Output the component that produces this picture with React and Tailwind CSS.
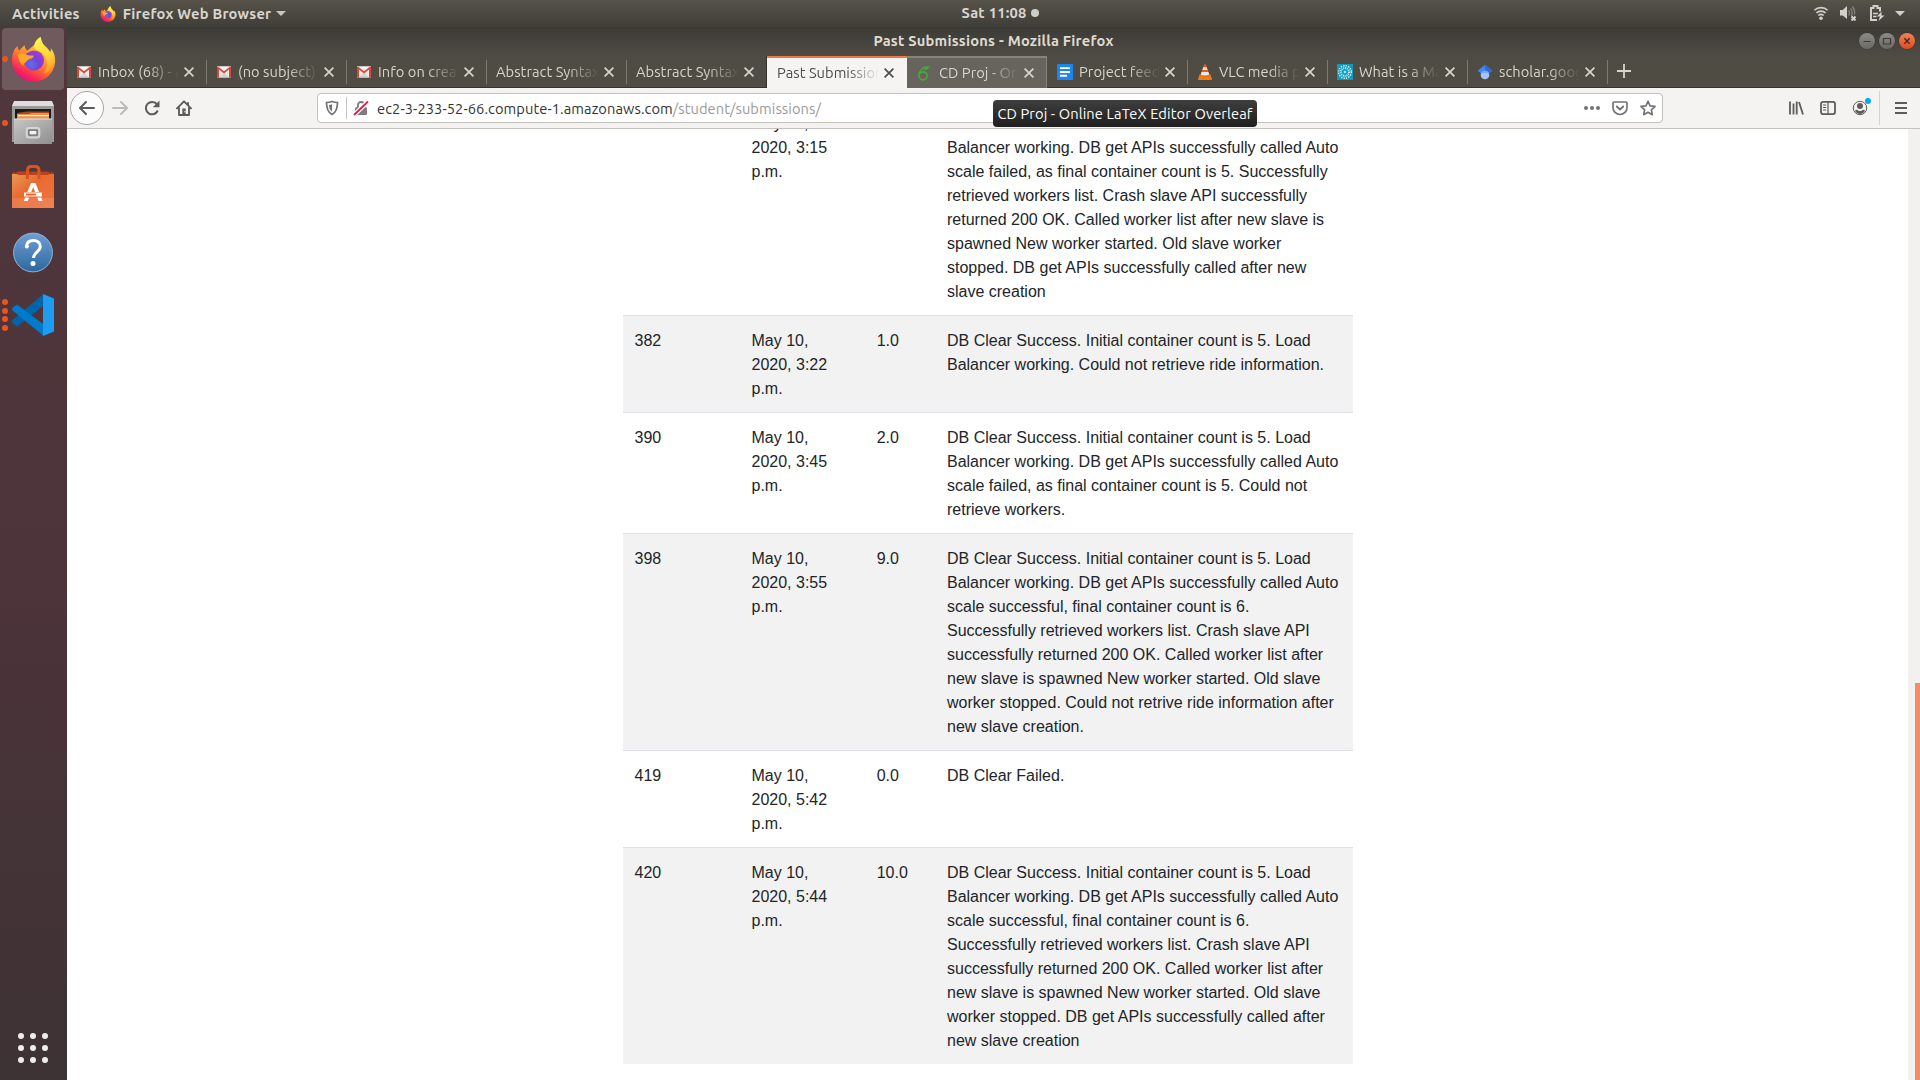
const ROWS = [
  {
    id: "",
    date: "May 10, 2020, 3:15 p.m.",
    marks: "",
    text: "DB Clear Success. Initial container count is 5. Load Balancer working. DB get APIs successfully called Auto scale failed, as final container count is 5. Successfully retrieved workers list. Crash slave API successfully returned 200 OK. Called worker list after new slave is spawned New worker started. Old slave worker stopped. DB get APIs successfully called after new slave creation",
  },
  {
    id: "382",
    date: "May 10, 2020, 3:22 p.m.",
    marks: "1.0",
    text: "DB Clear Success. Initial container count is 5. Load Balancer working. Could not retrieve ride information.",
  },
  {
    id: "390",
    date: "May 10, 2020, 3:45 p.m.",
    marks: "2.0",
    text: "DB Clear Success. Initial container count is 5. Load Balancer working. DB get APIs successfully called Auto scale failed, as final container count is 5. Could not retrieve workers.",
  },
  {
    id: "398",
    date: "May 10, 2020, 3:55 p.m.",
    marks: "9.0",
    text: "DB Clear Success. Initial container count is 5. Load Balancer working. DB get APIs successfully called Auto scale successful, final container count is 6. Successfully retrieved workers list. Crash slave API successfully returned 200 OK. Called worker list after new slave is spawned New worker started. Old slave worker stopped. Could not retrive ride information after new slave creation.",
  },
  { id: "419", date: "May 10, 2020, 5:42 p.m.", marks: "0.0", text: "DB Clear Failed." },
  {
    id: "420",
    date: "May 10, 2020, 5:44 p.m.",
    marks: "10.0",
    text: "DB Clear Success. Initial container count is 5. Load Balancer working. DB get APIs successfully called Auto scale successful, final container count is 6. Successfully retrieved workers list. Crash slave API successfully returned 200 OK. Called worker list after new slave is spawned New worker started. Old slave worker stopped. DB get APIs successfully called after new slave creation",
  },
];

function FirefoxLogo({ className, id }) {
  return (
    <svg viewBox="0 0 46 48" className={className}>
      <defs>
        <linearGradient id={id + "body"} x1="0.85" y1="0.05" x2="0.3" y2="1">
          <stop offset="0" stopColor="#fff44f" />
          <stop offset="0.35" stopColor="#ffb22e" />
          <stop offset="0.62" stopColor="#ff6b30" />
          <stop offset="0.85" stopColor="#f5275a" />
          <stop offset="1" stopColor="#e0127c" />
        </linearGradient>
        <linearGradient id={id + "flame"} x1="0.3" y1="0" x2="0.6" y2="1">
          <stop offset="0" stopColor="#fff44f" />
          <stop offset="0.6" stopColor="#ffd43a" />
          <stop offset="1" stopColor="#ff9a28" />
        </linearGradient>
        <radialGradient id={id + "globe"} cx="0.35" cy="0.7" r="0.8">
          <stop offset="0" stopColor="#5f6ff0" />
          <stop offset="0.5" stopColor="#7542d6" />
          <stop offset="1" stopColor="#b833e1" />
        </radialGradient>
      </defs>
      <path
        d="M2 17 C3 13.5 5 11.500 6.500 10.500 C6.500 13 7 14 8 15 C10 13 12 12 13.500 9.500 C14 12 14.500 14 16.500 15.500 L24 9 C24.500 6 27 3 30.500 1 C31 6 33 9 36 11.500 C38.500 14 39.500 15.500 40 17 C41 16.500 41.500 14.500 41 12.500 C44.500 17 46 22 45.500 27 C44.500 39 35 47.500 23 47.500 C10.500 47.500 1 38.500 0.500 26 C0.500 22.500 1 19.500 2 17 Z"
        fill={"url(#" + id + "body)"}
      />
      <circle cx="23.500" cy="25.500" r="10.500" fill={"url(#" + id + "globe)"} />
      <path
        d="M24 9 C24.500 6 27 3 30.500 1 C31 6 33 9 36 11.500 C42 17 45 24 43 31 C41 36 38 38 34 39 C37 35 38 29 36.500 24 C35 18.500 31 17 28 15.500 C25 14 23.500 12 24 9 Z"
        fill={"url(#" + id + "flame)"}
      />
      <path
        d="M7 19 C10 17 13 18.500 15.500 19.500 C18 20.500 20 20 23.500 20.500 C23 22.500 21 23.500 19 24 C16.500 24.800 16.500 26 15 27.500 C13.500 28 12.500 29 12.500 31 C9 29 6.500 23.500 7 19 Z"
        fill="#ffa62b"
      />
    </svg>
  );
}

function GmailIcon() {
  return (
    <svg viewBox="0 0 16 16" className="size-4">
      <path d="M1 2.500h14v11H1z" fill="#e9e9e9" />
      <path d="M3 13.500 8 8.500l5 5z" fill="#d2d2d2" />
      <path d="M1 2.500h14v1.200L8 9.500 1 3.700z" fill="#f4f4f4" />
      <path d="M1 3.200v10.300h2V5.600L8 9.600l5-4v7.900h2V3.200c0-.6-.7-.8-1.200-.5L8 7.200 2.200 2.700C1.700 2.400 1 2.600 1 3.200z" fill="#dc4437" />
    </svg>
  );
}

function OverleafIcon() {
  return (
    <svg viewBox="0 0 16 16" className="mr-px size-4" fill="none" stroke="#46a938" strokeWidth="1.700">
      <path d="M10.500 2C6 2.900 2.900 6.300 2.900 10.300c0 2.500 1.800 4.500 4.100 4.500s4.100-1.800 4.100-4.100-1.900-3.900-4-3.900c-1.700 0-3.100 1-3.800 2.400" />
      <path d="M6 3c2.500-1.400 4.500-1.800 7.500-1.500C12.500 4 10.300 5.200 7.800 5.100L10 3.200z" fill="#46a938" strokeWidth="0.400" />
    </svg>
  );
}

function DocsIcon() {
  return (
    <svg viewBox="0 0 16 16" className="size-4">
      <rect width="16" height="16" rx="1" fill="#1a85f3" />
      <path d="M3 3.200h10v1.900H3zM3 7h10v1.900H3zM3 10.800h7v1.900H3z" fill="#fff" />
    </svg>
  );
}

function VlcIcon() {
  return (
    <svg viewBox="0 0 16 16" className="size-4">
      <path d="M2.600 10.500h10.800L15 15.200c.1.500-.2.800-.7.800H1.700c-.5 0-.8-.3-.7-.8z" fill="#f07c12" />
      <path d="M7 .8C7.300 0 8.700 0 9 .8L12.600 11c-1.500 2-7.700 2-9.200 0z" fill="#ef5a13" />
      <path d="M6.300 3.200h3.400l.9 2.700H5.400zM4.600 8h6.800l.8 2.500c-1.500 1.400-6.900 1.400-8.400 0z" fill="#e8e8e8" />
    </svg>
  );
}

function BurstIcon() {
  return (
    <svg viewBox="0 0 16 16" className="size-4">
      <rect width="16" height="16" fill="#0d9cc0" />
      <g fill="none" stroke="#e6f7fb">
        <circle cx="8" cy="8" r="6.300" strokeWidth="1.500" strokeDasharray="1.200 1.270" />
        <circle cx="8" cy="8" r="4" strokeWidth="1.900" strokeDasharray="0.900 0.950" />
        <circle cx="8" cy="8" r="0.900" strokeWidth="0.900" />
      </g>
    </svg>
  );
}

function ScholarIcon() {
  return (
    <svg viewBox="0 0 16 16" className="size-4">
      <path d="M8 .8 15.500 6.800 12 9.300H4L.5 6.800z" fill="#4285f4" />
      <path d="M8 .8 15.500 6.800 12 9.300 8 6z" fill="#2f6bd6" />
      <circle cx="8" cy="11" r="4.300" fill="#a5c4fa" />
      <path d="M3.900 9.600C4.600 7.900 6.200 6.800 8 6.800s3.400 1.100 4.100 2.800c-2.500-1.300-5.700-1.300-8.200 0z" fill="#76a7fa" />
    </svg>
  );
}

function CloseIcon() {
  return (
    <svg viewBox="0 0 10 10" className="size-[10px] shrink-0" fill="none" stroke="currentColor" strokeWidth="1.700">
      <path d="M.6.6l8.800 8.800M9.400.6.6 9.400" />
    </svg>
  );
}

const TABS = [
  { title: "Inbox (68) - a", icon: <GmailIcon /> },
  { title: "(no subject) -", icon: <GmailIcon /> },
  { title: "Info on creat", icon: <GmailIcon /> },
  { title: "Abstract Syntax" },
  { title: "Abstract Syntax", last: true },
  { title: "Past Submission", active: true },
  { title: "CD Proj - Onli", icon: <OverleafIcon />, hovered: true },
  { title: "Project feedb", icon: <DocsIcon />, wide: true },
  { title: "VLC media pl", icon: <VlcIcon /> },
  { title: "What is a Mat", icon: <BurstIcon /> },
  { title: "scholar.goog", icon: <ScholarIcon /> },
];

function Tab({ tab }) {
  let look = "pt-0 text-[#d9d5cb]";
  if (tab.active) look = "bg-[#f5f4f2] text-[#4c4c4c] border-t-2 border-[#f07746]";
  if (tab.hovered) look = "bg-[#66645d] text-[#d9d5cb] border-t-2 border-[#85837c]";
  let edge = "h-6 w-px bg-[#7d7a72]";
  if (tab.active) edge = "hidden";
  if (tab.hovered) edge = "h-8 w-px bg-[#85837c]";
  if (tab.last) edge = "h-8 w-px bg-[#33322d]";
  let inset = "pl-[9px] pr-[12px]";
  if (tab.wide) inset = "pl-[10px] pr-[12px]";
  if (tab.active) inset = "pl-[10px] pr-[13px]";
  return (
    <div className={"flex h-8 items-center " + (tab.wide ? "w-[141px] " : "w-[140px] ") + look}>
      <div className={"flex min-w-0 flex-1 items-center " + inset}>
        {tab.icon && <div className="mr-[6px] shrink-0">{tab.icon}</div>}
        <div className="min-w-0 flex-1 overflow-hidden whitespace-nowrap text-[14.667px] leading-5 tracking-[0.05px] [mask-image:linear-gradient(to_left,transparent,black_32px)]">
          {tab.title}
        </div>
        <div className="ml-[5px]">
          <CloseIcon />
        </div>
      </div>
      <div className={edge} />
    </div>
  );
}

function TopBar() {
  return (
    <header className="grid h-[27px] shrink-0 grid-cols-3 items-center bg-gradient-to-b from-[#57534a] to-[#3f3e38] text-[14.667px] font-bold leading-[27px] tracking-[0.25px] text-[#d8d5cf]">
      <div className="flex items-center pl-3">
        <span>Activities</span>
        <FirefoxLogo id="mini" className="ml-[20px] h-4 w-4" />
        <span className="ml-[7px]">Firefox Web Browser</span>
        <span className="ml-[5px] border-x-[5px] border-t-[5px] border-x-transparent border-t-[#c9c6c0]" />
      </div>
      <div className="flex items-center justify-center pb-px pl-[80px] leading-[26px]">
        <span>Sat 11:08</span>
        <span className="ml-1 size-2 rounded-full bg-[#d0cdc8]" />
      </div>
      <div className="flex items-center justify-end pb-px pr-[15px] text-[#d2d0cb]">
        <svg viewBox="0 0 16 16" className="size-4" fill="none" stroke="currentColor" strokeWidth="1.600">
          <path d="M1.400 5.300C5 1.700 11 1.700 14.600 5.300M3.400 8c2.600-2.500 6.600-2.500 9.200 0M5.300 10.500c1.600-1.400 3.800-1.400 5.400 0" />
          <circle cx="8" cy="13.300" r="1.800" fill="currentColor" stroke="none" />
        </svg>
        <svg viewBox="0 0 17 16" className="ml-[11px] h-4 w-[17px]" fill="none" stroke="#85827b" strokeWidth="1.300">
          <path d="M0 5h2.800L7 1v13L2.800 10.500H0z" fill="#d2d0cb" stroke="none" />
          <path d="M8.800 5.200c1 1.600 1 3.500 0 5.100M10.600 3.300c2 2.800 2 5.700.6 8M12.500 1.500c2 2.700 2.600 5.500 2 8" />
          <path d="M11.500 11.500l4 4M15.500 11.500l-4 4" stroke="#d2d0cb" strokeWidth="2" />
        </svg>
        <svg viewBox="0 0 15 16" className="ml-[13px] h-4 w-[15px]" fill="none" stroke="currentColor" strokeWidth="2">
          <path d="M7 15H1V3h2.500V1h4v2H10v3.500" />
          <path d="M3 8.500h5M3 11.500h3.500" strokeWidth="1.300" />
          <path d="M11.500 6.500 7 11.500h3L8.500 16l6-5.500h-3z" fill="currentColor" stroke="none" />
        </svg>
        <span className="ml-[10px] border-x-[5px] border-t-[5px] border-x-transparent border-t-[#d2d0cb]" />
      </div>
    </header>
  );
}

function Dots({ n }) {
  return (
    <div className="flex w-[10px] flex-col items-center gap-[2.500px]">
      {Array.from({ length: n }, (_, i) => (
        <span key={i} className="size-[6px] rounded-full bg-[#e95420]" />
      ))}
    </div>
  );
}

function DockItem({ dots, active, children }) {
  return (
    <div className="flex h-16 w-[67px] items-center">
      <div className="flex w-0 justify-start">
        <div className="z-10 shrink-0">{dots > 0 && <Dots n={dots} />}</div>
      </div>
      <div className={"ml-[2px] flex size-[62px] items-center justify-center rounded " + (active ? "bg-[#6f5a5e]" : "")}>{children}</div>
    </div>
  );
}

function Dock() {
  return (
    <aside className="flex w-[67px] shrink-0 flex-col bg-gradient-to-b from-[#50373c] via-[#4d343a] to-[#3d3234]">
      <DockItem dots={1} active>
        <FirefoxLogo id="dock" className="h-[46px] w-[45px]" />
      </DockItem>
      <DockItem dots={1}>
        <svg viewBox="0 0 42 44" className="h-11 w-[42px]">
          <defs>
            <linearGradient id="drawer" x1="0" y1="0" x2="1" y2="1">
              <stop offset="0" stopColor="#c6c6c6" />
              <stop offset="1" stopColor="#8f8f8f" />
            </linearGradient>
          </defs>
          <path d="M0 5h42v36H0z" fill="#9b9b9b" />
          <path d="M2 0h38l2 5H0z" fill="#dedede" />
          <path d="M3 8h36v12H3z" fill="#191b1c" />
          <path d="M5 12l10-1.500h22V20H5z" fill="#b5431a" />
          <path d="M5 13h12l2-1h18v8H5z" fill="#e8924a" />
          <path d="M6 14h31v1.200H6z" fill="#fdf3e6" />
          <path d="M2 18h38v25H2z" fill="url(#drawer)" />
          <path d="M2 17.500h38v1H2z" fill="#e4e4e4" />
          <rect x="14.800" y="27" width="12.500" height="9.500" rx="2" fill="#a9a9a9" stroke="#d6d6d6" strokeWidth="2" />
          <rect x="17" y="29.200" width="8" height="4.800" fill="#f3f3f3" stroke="#555" strokeWidth="1" />
        </svg>
      </DockItem>
      <DockItem>
        <svg viewBox="0 0 42 44" className="h-11 w-[42px]">
          <defs>
            <linearGradient id="bag" x1="0" y1="0" x2="1" y2="1">
              <stop offset="0" stopColor="#e89a58" />
              <stop offset="0.400" stopColor="#ea6a31" />
              <stop offset="1" stopColor="#f0743f" />
            </linearGradient>
          </defs>
          <path d="M0 9 2 6.500 4 9l2-2.500h30L38 9l2-2.500L42 9v3H0z" fill="#b6401a" />
          <path d="M0 9h42v34H0z" fill="url(#bag)" />
          <path d="M4 7h34l-2 3H6z" fill="#b9431c" />
          <path d="M0 33h42v10H0z" fill="#fff" opacity="0.100" />
          <path d="M15.500 14V5.500C15.500 2.500 17 1.500 19 1.500h4.500c2 0 3.500 1 3.500 4V14" fill="none" stroke="#d95425" strokeWidth="3" />
          <path d="M19 18h4.500l3.600 9h-4l-1.900-5-1.900 5h-4z" fill="#fff" />
          <path d="M12 27.500h18v4H12z" fill="#fff" />
          <path d="M14 28.600h10v1.800H14z" fill="#e95f22" />
          <path d="M13.200 32.500h4L15.800 36h-4zM25.200 32.500h4l1.400 3.500h-4z" fill="#fff" />
        </svg>
      </DockItem>
      <DockItem>
        <svg viewBox="0 0 42 42" className="mt-px size-[42px]">
          <defs>
            <linearGradient id="help" x1="0" y1="0" x2="0" y2="1">
              <stop offset="0" stopColor="#6f9fd6" />
              <stop offset="1" stopColor="#2c689c" />
            </linearGradient>
          </defs>
          <circle cx="21" cy="21.500" r="19.400" fill="url(#help)" stroke="#8db4dc" strokeWidth="1" />
          <path d="M14.500 15.500c.3-4 3-6 6.800-6 4.300 0 7 2.300 7 6 0 5-6.800 5.800-6.800 11.500" fill="none" stroke="#fff" strokeWidth="3" />
          <circle cx="14.900" cy="15.500" r="2" fill="#fff" />
          <circle cx="21" cy="32.500" r="2.500" fill="#fff" />
        </svg>
      </DockItem>
      <DockItem dots={4}>
        <svg viewBox="0 0 42 42" className="size-[42px]">
          <path d="M31 .5v11.400L5 32.500.2 28.800v-2.600z" fill="#0065a9" />
          <path d="M31 30 5 10.500.2 13.800v2.400L31 41.500z" fill="#007acc" />
          <path d="M31 0l11 4.500v33L31 42z" fill="#1f9cf0" />
        </svg>
      </DockItem>
      <div className="mb-[17px] ml-[18px] mt-auto grid w-[30px] grid-cols-3 gap-[6px]">
        {Array.from({ length: 9 }, (_, i) => (
          <span key={i} className="size-[6px] rounded-full bg-[#f0eeec]" />
        ))}
      </div>
    </aside>
  );
}

function TitleBar() {
  return (
    <div className="grid h-[29px] shrink-0 grid-cols-[1fr_auto_1fr] items-center bg-gradient-to-b from-[#3b3a35] to-[#4f4c44]">
      <span />
      <span className="pb-[2px] text-[14.667px] font-bold leading-[27px] tracking-[0.22px] text-[#dfdbd2]">Past Submissions - Mozilla Firefox</span>
      <div className="mt-[-1px] flex justify-end gap-1 pr-[5px]">
        {["M4.500 8.500h7", "M4.500 5.500h7v5.500h-7z"].map((d) => (
          <svg key={d} viewBox="0 0 16 16" className="size-4 rounded-full bg-gradient-to-b from-[#8d8b85] to-[#6b6963] shadow-[0_0_0_0.500px_#33322d]" fill="none" stroke="#3c3b37" strokeWidth="1.200">
            <path d={d} />
          </svg>
        ))}
        <svg viewBox="0 0 16 16" className="size-4 rounded-full bg-gradient-to-b from-[#f37f58] to-[#df4b1a] shadow-[0_0_0_0.500px_#33322d]" fill="none" stroke="#3c2a22" strokeWidth="1.300">
          <path d="M5.300 5.300l5.400 5.400M10.700 5.300l-5.400 5.400" />
        </svg>
      </div>
    </div>
  );
}

function TabStrip() {
  return (
    <div className="flex h-8 shrink-0 bg-[#4f4c44] shadow-[inset_0_-1px_0_#33322d]">
      {TABS.map((tab, i) => (
        <Tab key={i} tab={tab} />
      ))}
      <svg viewBox="0 0 14 14" className="ml-[9px] mt-[8px] size-[14px]" stroke="#d9d5cb" strokeWidth="1.800">
        <path d="M7 0v14M0 7h14" />
      </svg>
    </div>
  );
}

function NavBar() {
  return (
    <div className="flex h-[41px] shrink-0 items-center border-b border-[#c4c1bd] bg-[#f4f3f1] text-[#5c5c5b]">
      <div className="ml-[3px] flex size-[34px] items-center justify-center rounded-full border border-[#a9a7a4] bg-[#fcfcfc]">
        <svg viewBox="0 0 16 16" className="size-4" fill="none" stroke="currentColor" strokeWidth="2" strokeLinecap="round" strokeLinejoin="round">
          <path d="M15 8H1.500M7 2 1 8l6 6" />
        </svg>
      </div>
      <svg viewBox="0 0 16 16" className="ml-2 size-4 text-[#bcbbb9]" fill="none" stroke="currentColor" strokeWidth="2" strokeLinecap="round" strokeLinejoin="round">
        <path d="M1 8h13.500M9 2l6 6-6 6" />
      </svg>
      <svg viewBox="0 0 16 16" className="ml-[16px] size-4" fill="none" stroke="currentColor" strokeWidth="2">
        <path d="M13.800 10.500A6.200 6.200 0 1 1 13 4.300" />
        <path d="M15.500.5v6.700H8.800z" fill="currentColor" stroke="none" />
      </svg>
      <svg viewBox="0 0 16 16" className="ml-4 size-4" fill="none" stroke="currentColor" strokeWidth="1.900" strokeLinejoin="round" strokeLinecap="round">
        <path d="M1 8.300 8 1.300l7 7M3 8v7h10V8" />
        <path d="M6.300 8.500h3.400V15H6.300z" fill="currentColor" stroke="none" />
        <path d="M12 2.200v3" strokeLinecap="butt" />
        <circle cx="8.900" cy="11.700" r="0.700" fill="#f4f3f1" stroke="none" />
      </svg>
      <div className="ml-[125px] flex h-[30px] w-[1346px] items-center rounded border border-[#c3c0bc] bg-white text-[#737373]">
        <svg viewBox="0 0 16 16" className="ml-[6px] size-4" fill="none" stroke="currentColor" strokeWidth="1.700">
          <path d="M8 1.500c2 .8 3.500 1 5.500 1 0 5.500-.8 9.500-5.500 12-4.700-2.500-5.500-6.500-5.500-12 2 0 3.500-.2 5.500-1z" />
          <path d="M8 4.300C7 4.700 6 5 5 5c.1 3 .8 5 3 6.700z" fill="currentColor" stroke="none" />
        </svg>
        <span className="ml-[6px] h-[22px] w-px bg-[#c6c4c1]" />
        <svg viewBox="0 0 16 16" className="ml-[6px] size-4">
          <path d="M5 8V5a3 3 0 0 1 6 0v3" fill="none" stroke="#7c7c7c" strokeWidth="1.900" />
          <rect x="2" y="7" width="12" height="8" rx="1.500" fill="#7c7c7c" />
          <path d="M1 15 15 1.500" stroke="#fff" strokeWidth="4.500" />
          <path d="M1 15 15 1.500" stroke="#f5144a" strokeWidth="1.800" />
        </svg>
        <span className="ml-[8px] pt-[2px] text-[14.667px] leading-5 tracking-[0.08px] text-[#9b9a98]">
          <span className="text-[#333]">ec2-3-233-52-66.compute-1.amazonaws.com</span>/student/submissions/
        </span>
        <div className="ml-auto flex items-center gap-3 pr-[6px]">
          <svg viewBox="0 0 16 16" className="size-4" fill="currentColor">
            <circle cx="2" cy="8" r="2" />
            <circle cx="8" cy="8" r="2" />
            <circle cx="14" cy="8" r="2" />
          </svg>
          <svg viewBox="0 0 16 16" className="size-4" fill="none" stroke="currentColor" strokeWidth="1.900" strokeLinejoin="round" strokeLinecap="round">
            <path d="M2 2h12c.5 0 1 .4 1 1v4.500a7 7 0 0 1-14 0V3c0-.6.5-1 1-1z" strokeWidth="1.700" />
            <path d="M4.800 6.500 8 9.500l3.200-3" />
          </svg>
          <svg viewBox="0 0 16 16" className="size-4" fill="none" stroke="currentColor" strokeWidth="1.700" strokeLinejoin="round">
            <path d="M8 1.300l2.100 4.500 4.900.6-3.600 3.400.9 4.900L8 12.300l-4.300 2.400.9-4.900L1 6.400l4.900-.6z" />
          </svg>
        </div>
      </div>
      <div className="ml-auto flex items-center">
        <svg viewBox="0 0 16 16" className="size-4" fill="none" stroke="currentColor" strokeWidth="1.800">
          <path d="M2 1.500v13M5.500 3.500v11M8.700 1.500v13M11 2l4 12.500" />
        </svg>
        <svg viewBox="0 0 16 16" className="ml-4 size-4" fill="none" stroke="currentColor" strokeWidth="1.800">
          <rect x="1" y="1.900" width="14" height="12.200" rx="2" />
          <path d="M8 2v12M3 5h3.200M3 7.500h3.200M3 10h3.200" strokeWidth="1.200" />
        </svg>
        <div className="relative ml-4 size-4">
          <svg viewBox="0 0 16 16" className="size-4" fill="currentColor">
            <circle cx="8" cy="8" r="6.700" fill="none" stroke="currentColor" strokeWidth="1" />
            <circle cx="8" cy="6" r="3" />
            <path d="M3 10.500c1.200-1 2.300-.8 3 0 1 .7 3 .7 4 0 .7-.8 1.800-1 3 0C12.200 12.700 10.200 14 8 14s-4.200-1.300-5-3.500z" />
          </svg>
          <span className="absolute -right-[3px] -top-[2px] size-[6px] rounded-full bg-[#00a7fb]" />
        </div>
        <span className="ml-[11px] h-[34px] w-px bg-[#d5d3d0]" />
        <svg viewBox="0 0 12 12" className="ml-[15px] mr-[13px] size-3" stroke="currentColor" strokeWidth="1.800">
          <path d="M0 1h12M0 6h12M0 11h12" />
        </svg>
      </div>
    </div>
  );
}

function Page() {
  return (
    <main className="flex min-h-0 flex-1 overflow-hidden bg-white">
      <div className="min-w-0 flex-1 overflow-hidden">
        <table className="-mt-[31px] ml-[556px] w-[730px] table-fixed border-collapse font-['Liberation_Sans',Arial,sans-serif] text-base text-[#212529]">
          <colgroup>
            <col className="w-[116.500px]" />
            <col className="w-[125.200px]" />
            <col className="w-[70.300px]" />
            <col className="w-[418px]" />
          </colgroup>
          <tbody>
            {ROWS.map((r) => (
              <tr key={r.date} className="border-t border-[#dee2e6] align-top even:bg-[#f2f2f2]">
                <td className="px-[11.500px] pb-[11px] pt-[13px]">{r.id}</td>
                <td className="pb-[11px] pl-3 pr-8 pt-[13px]">{r.date}</td>
                <td className="px-3 pb-[11px] pt-[13px]">{r.marks}</td>
                <td className="px-3 pb-[11px] pt-[13px]">{r.text}</td>
              </tr>
            ))}
          </tbody>
        </table>
      </div>
      <div className="flex w-3 flex-col items-end justify-end bg-[#f2f1f0]">
        <div className="h-[397px] w-[5px] bg-[#f48b66]" />
      </div>
    </main>
  );
}

export default function App() {
  return (
    <div className="relative flex h-[1080px] w-[1920px] flex-col overflow-hidden font-['Ubuntu','Noto_Sans',sans-serif]">
      <TopBar />
      <div className="flex min-h-0 flex-1">
        <Dock />
        <div className="flex min-w-0 flex-1 flex-col">
          <TitleBar />
          <TabStrip />
          <NavBar />
          <Page />
        </div>
      </div>
      <div className="absolute left-[993px] top-[100px] flex h-[27px] w-[264px] items-center justify-center whitespace-nowrap rounded bg-gradient-to-b from-[#3f3f3f] to-[#1f1f1f] text-[14.667px] tracking-[0.12px] text-white">
        CD Proj - Online LaTeX Editor Overleaf
      </div>
    </div>
  );
}
